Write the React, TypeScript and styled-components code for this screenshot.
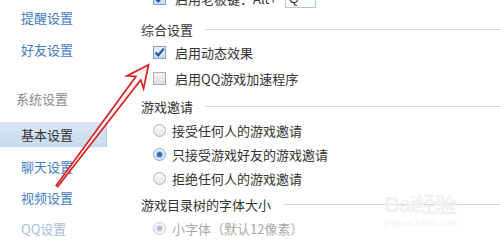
import React from "react";
import styled, { createGlobalStyle, css } from "styled-components";

const Global = createGlobalStyle`
  html, body { margin: 0; padding: 0; background: #fff; }
  body { overflow: hidden; font-family: "Noto Sans CJK SC", "Noto Sans", sans-serif; }
`;

const Page = styled.div`
  position: relative;
  width: 500px;
  height: 245px;
  overflow: hidden;
  display: flex;
  background: #fff;
  font-size: 13px;
  color: #333;
`;

const Sidebar = styled.nav`
  width: 108px;
  flex-shrink: 0;
  display: flex;
  flex-direction: column;
  padding-top: 1px;
`;

type NavKind = "link" | "group" | "active" | "faded";

const NavItem = styled.div<{ $kind: NavKind; $h: number; $mt?: number }>`
  height: ${(p) => p.$h}px;
  margin-top: ${(p) => p.$mt ?? 0}px;
  display: flex;
  align-items: center;
  padding-left: ${(p) => (p.$kind === "group" ? 16 : 21)}px;
  box-sizing: border-box;
  color: ${(p) =>
    p.$kind === "group"
      ? "#8a8a8a"
      : p.$kind === "active"
      ? "#333"
      : p.$kind === "faded"
      ? "#a9bfda"
      : "#3f7dc2"};
  ${(p) =>
    p.$kind === "active" &&
    css`
      width: 107px;
      background: linear-gradient(#d8e6f4, #c8dbee);
      border-right: 1px solid #bcd2e8;
    `}
`;

const Content = styled.main`
  flex: 1;
  display: flex;
  flex-direction: column;
  padding-left: 33px;
  margin-top: -14px;
`;

const Row = styled.div<{ $h: number; $mt?: number; $disabled?: boolean }>`
  height: ${(p) => p.$h}px;
  margin-top: ${(p) => p.$mt ?? 0}px;
  display: flex;
  align-items: center;
  padding-left: 12px;
  color: ${(p) => (p.$disabled ? "#aaa" : "#333")};
`;

const Header = styled.div<{ $mt: number }>`
  height: 20px;
  margin-top: ${(p) => p.$mt}px;
  display: flex;
  align-items: center;
  color: #333;
  &::after {
    content: "";
    flex: 1;
    height: 1px;
    background: #d6d6d6;
    margin-left: 12px;
  }
`;

const Box = styled.span<{ $checked?: boolean }>`
  width: 13px;
  height: 13px;
  box-sizing: border-box;
  margin-right: 9px;
  border: 1px solid ${(p) => (p.$checked ? "#7fa4cc" : "#adadad")};
  background: ${(p) =>
    p.$checked ? "linear-gradient(#e6f0fa, #c9dcf0)" : "linear-gradient(#f4f4f4, #dedede)"};
  display: flex;
  align-items: center;
  justify-content: center;
  flex-shrink: 0;
`;

const Radio = styled.span<{ $checked?: boolean; $disabled?: boolean }>`
  width: 13px;
  height: 13px;
  box-sizing: border-box;
  border-radius: 50%;
  margin-right: 6px;
  border: 1px solid ${(p) => (p.$disabled ? "#d0d0d0" : p.$checked ? "#8aa9c9" : "#b2b2b2")};
  background: ${(p) =>
    p.$disabled ? "#f4f4f4" : p.$checked ? "linear-gradient(#eef4fa, #d5e3f1)" : "linear-gradient(#fafafa, #e6e6e6)"};
  display: flex;
  align-items: center;
  justify-content: center;
  flex-shrink: 0;
  &::after {
    content: "";
    display: ${(p) => (p.$checked ? "block" : "none")};
    width: 5px;
    height: 5px;
    border-radius: 50%;
    background: ${(p) => (p.$disabled ? "#a9c0d8" : "#2e6db5")};
    box-shadow: 0 0 0 1px ${(p) => (p.$disabled ? "#dde6ef" : "#9fc0e2")};
  }
`;

const KeyInput = styled.span`
  margin-left: 8px;
  width: 31px;
  height: 20px;
  box-sizing: border-box;
  border: 1px solid #a9c9e2;
  display: flex;
  align-items: center;
  padding-left: 3px;
  font-family: "Liberation Sans", sans-serif;
`;

const ArrowLayer = styled.svg`
  position: absolute;
  left: 0;
  top: 0;
  pointer-events: none;
`;

const Watermark = styled.div`
  position: absolute;
  left: 384px;
  top: 190px;
  display: flex;
  flex-direction: column;
  align-items: center;
  color: #f1f1f1;
  font-family: "Liberation Sans", sans-serif;
  pointer-events: none;
`;

const WmLogo = styled.span`
  font-size: 22px;
  font-weight: bold;
  letter-spacing: -1px;
`;

const WmUrl = styled.span`
  font-size: 9px;
  margin-top: -2px;
`;

const Check = () => (
  <svg width="11" height="11" viewBox="0 0 11 11">
    <path d="M1.5 5.5 L4.3 8.3 L9.8 1.6" fill="none" stroke="#1d5aa3" strokeWidth="2.2" />
  </svg>
);

const P = (s: number, t: number) => {
  const x = 57 + 0.602 * s + 0.798 * t;
  const y = 186 - 0.798 * s + 0.602 * t;
  return `${x.toFixed(1)},${y.toFixed(1)}`;
};

const arrowPoints = [
  P(0, -1),
  P(135, -3),
  P(130, -10.5),
  P(152, 0),
  P(130, 10.5),
  P(135, 3),
  P(0, 1),
].join(" ");

export default function App() {
  return (
    <Page>
      <Global />
      <Sidebar>
        <NavItem $kind="link" $h={32}>提醒设置</NavItem>
        <NavItem $kind="link" $h={32}>好友设置</NavItem>
        <NavItem $kind="group" $h={32} $mt={17}>系统设置</NavItem>
        <NavItem $kind="active" $h={25} $mt={8}>基本设置</NavItem>
        <NavItem $kind="link" $h={31} $mt={4}>聊天设置</NavItem>
        <NavItem $kind="link" $h={31}>视频设置</NavItem>
        <NavItem $kind="faded" $h={31}>QQ设置</NavItem>
      </Sidebar>
      <Content>
        <Row $h={24}>
          <Box $checked>
            <Check />
          </Box>
          启用老板键：Alt+
          <KeyInput>Q</KeyInput>
        </Row>
        <Header $mt={9}>综合设置</Header>
        <Row $h={26}>
          <Box $checked>
            <Check />
          </Box>
          启用动态效果
        </Row>
        <Row $h={26}>
          <Box />
          启用QQ游戏加速程序
        </Row>
        <Header $mt={5}>游戏邀请</Header>
        <Row $h={24} $mt={2}>
          <Radio />
          接受任何人的游戏邀请
        </Row>
        <Row $h={24}>
          <Radio $checked />
          只接受游戏好友的游戏邀请
        </Row>
        <Row $h={24}>
          <Radio />
          拒绝任何人的游戏邀请
        </Row>
        <Header $mt={4}>游戏目录树的字体大小</Header>
        <Row $h={24} $mt={2} $disabled>
          <Radio $checked $disabled />
          小字体（默认12像素）
        </Row>
      </Content>
      <Watermark>
        <WmLogo>Bai经验</WmLogo>
        <WmUrl>jingyan.baidu.com</WmUrl>
      </Watermark>
      <ArrowLayer width="500" height="245" viewBox="0 0 500 245">
        <polygon
          points={arrowPoints}
          fill="#fff4f4"
          stroke="#d42323"
          strokeWidth="1.7"
          strokeLinejoin="miter"
        />
      </ArrowLayer>
    </Page>
  );
}
